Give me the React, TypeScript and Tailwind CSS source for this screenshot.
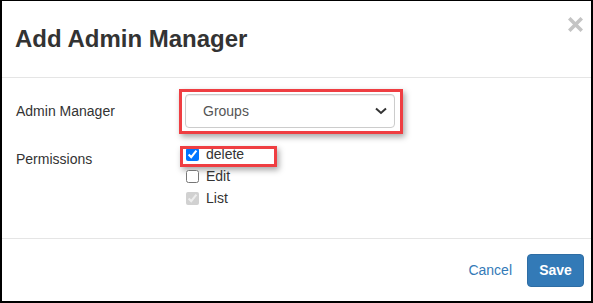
import React from 'react'

const FONT = { fontFamily: '"Liberation Sans", Arial, Helvetica, sans-serif' }

function CloseIcon() {
  return (
    <svg width="15" height="15" viewBox="0 0 15 15" className="block">
      <path d="M2.5 2.5 L12.5 12.5 M12.5 2.5 L2.5 12.5" stroke="#c4c4c4" strokeWidth="3.6" strokeLinecap="square" />
    </svg>
  )
}

function Chevron() {
  return (
    <svg width="12" height="8" viewBox="0 0 12 8" className="block">
      <path d="M1 1.5 L6 6 L11 1.5" fill="none" stroke="#333" strokeWidth="2" />
    </svg>
  )
}

const PERMS = [
  { name: 'delete', checked: true, disabled: false },
  { name: 'Edit', checked: false, disabled: false },
  { name: 'List', checked: true, disabled: true },
]

export default function App() {
  return (
    <div className="w-[593px] h-[303px] border-l-2 border-t border-r-2 border-b-2 border-black bg-white text-[14px] text-[#333]" style={FONT}>
      <div className="flex flex-col h-full">
        {/* header */}
        <div className="h-[77px] shrink-0 border-b border-[#e5e5e5] flex justify-between pl-[13px] pr-[8px]">
          <h4 className="pt-[24px] text-[24px] leading-[28px] font-bold text-[#333]">Add Admin Manager</h4>
          <button className="mt-[16px] self-start w-[15px] h-[15px]" title="Close">
            <CloseIcon />
          </button>
        </div>

        {/* body */}
        <div className="h-[161px] shrink-0 border-b border-[#e5e5e5] pl-[14px] pt-[16px]">
          <div className="flex items-center">
            <label className="w-[169px] leading-5">Admin Manager</label>
            <div className="relative">
              <div className="w-[210px] h-[34px] border border-[#ccc] rounded-[4px] flex items-center justify-between pl-[17px] pr-[7px] text-[#555] shadow-[inset_0_1px_1px_rgba(0,0,0,0.075)]">
                <span>Groups</span>
                <Chevron />
              </div>
              <div className="absolute -left-[6px] -right-[8px] -top-[5px] -bottom-[6px] border-[3px] border-[#ef3e42] shadow-[2px_3px_6px_rgba(0,0,0,0.35)] pointer-events-none" />
            </div>
          </div>

          <div className="flex mt-[15px]">
            <label className="w-[170px] pt-[6px] leading-5">Permissions</label>
            <div className="flex flex-col">
              {PERMS.map((p, i) => (
                <div key={p.name} className="relative h-[22px] flex items-center">
                  <input
                    type="checkbox"
                    defaultChecked={p.checked}
                    disabled={p.disabled}
                    className="w-[13px] h-[13px] m-0"
                  />
                  <span className="ml-[7px] leading-5">{p.name}</span>
                  {i === 0 && (
                    <div className="absolute left-[-6px] top-[3px] w-[97px] h-[21px] border-[3px] border-[#ef3e42] shadow-[2px_3px_6px_rgba(0,0,0,0.35)] pointer-events-none" />
                  )}
                </div>
              ))}
            </div>
          </div>
        </div>

        {/* footer */}
        <div className="flex-1 flex items-center justify-end pr-[7px] gap-[15px]">
          <button className="text-[#337ab7] leading-5">Cancel</button>
          <button className="w-[57px] h-[33px] rounded-[4px] bg-[#337ab7] border border-[#2e6da4] text-white font-bold leading-5">Save</button>
        </div>
      </div>
    </div>
  )
}
